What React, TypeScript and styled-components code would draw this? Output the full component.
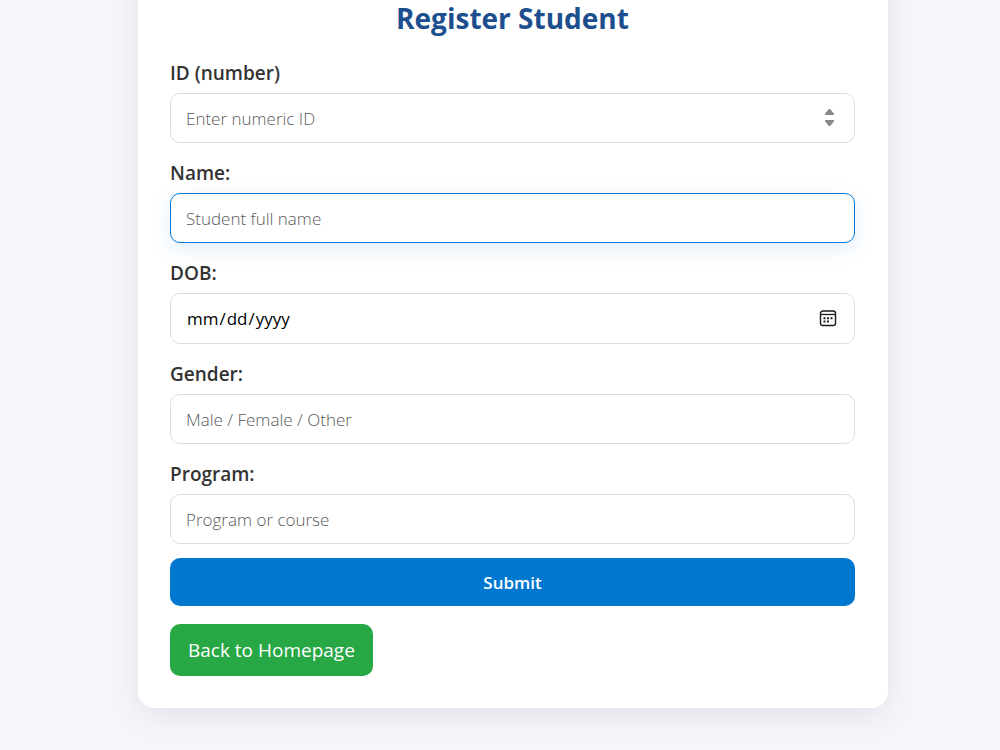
import React from "react";
import styled, { createGlobalStyle, css } from "styled-components";

const GlobalStyle = createGlobalStyle`
  *, *::before, *::after { box-sizing: border-box; }
  body {
    margin: 0;
    background: #f4f6fb;
    color: #333;
    font-family: "Segoe UI", "Open Sans", "Noto Sans", sans-serif;
  }
`;

const Page = styled.main`
  display: flex;
  justify-content: center;
  min-height: 100vh;
  padding: 0 0 42px 26px;
  overflow: hidden;
`;

const Card = styled.section`
  align-self: flex-start;
  width: 100%;
  max-width: 750px;
  margin-top: -32px;
  padding: 32px 33px 32px 32px;
  background: #fff;
  border-radius: 16px;
  box-shadow: 0 8px 30px rgba(0, 0, 0, 0.08);
`;

const Title = styled.h2`
  margin: 0 0 25px;
  color: #1d4f8f;
  font-size: 28px;
  line-height: 36px;
  font-weight: 700;
  text-align: center;
`;

const Form = styled.form`
  display: flex;
  flex-direction: column;
  gap: 18px;
`;

const Field = styled.div`
  display: flex;
  flex-direction: column;
  gap: 8px;
`;

const Label = styled.label`
  font-size: 19px;
  line-height: 24px;
  font-weight: 600;
`;

const Control = styled.div`
  position: relative;
  display: flex;
`;

const Input = styled.input<{ $highlighted?: boolean }>`
  width: 100%;
  height: 50px;
  padding: 0 15px;
  border: 1px solid #d9dce1;
  border-radius: 10px;
  outline: none;
  background: #fff;
  color: #000;
  font-family: inherit;
  font-size: 17px;
  font-weight: 400;

  &::placeholder {
    color: #5a5a5a;
    font-weight: 300;
    opacity: 1;
  }

  &[type="date"] {
    height: 51px;
  }

  &::-webkit-inner-spin-button {
    opacity: 0;
  }

  &::-webkit-calendar-picker-indicator {
    opacity: 0;
  }

  &:focus {
    border-color: #0078d4;
    box-shadow: 0 6px 20px rgba(0, 120, 212, 0.12);
  }

  ${({ $highlighted }) =>
    $highlighted &&
    css`
      border-color: #0078d4;
      box-shadow: 0 6px 20px rgba(0, 120, 212, 0.12);
    `}
`;

const ControlIcon = styled.svg`
  position: absolute;
  top: 50%;
  right: 18px;
  transform: translateY(-50%);
  pointer-events: none;
`;

const SubmitButton = styled.button`
  height: 48px;
  margin-top: -4px;
  border: 0;
  border-radius: 10px;
  background: #0078d0;
  color: #fff;
  font-family: inherit;
  font-size: 17px;
  font-weight: 600;
  cursor: pointer;
`;

const HomeLink = styled.a`
  display: inline-block;
  margin-top: 18px;
  padding: 0 18px;
  border-radius: 10px;
  background: #28a745;
  color: #fff;
  font-size: 19px;
  line-height: 52px;
  text-decoration: none;
  vertical-align: top;
`;

const SpinnerIcon = () => (
  <ControlIcon width="15" height="22" viewBox="0 0 15 22" aria-hidden="true">
    <path
      d="M6.800 2h1.400L12 6.800V8H3V6.800zM3 13h9v1.200L8.200 19H6.800L3 14.200z"
      fill="#8a8a8a"
    />
  </ControlIcon>
);

const CalendarIcon = () => (
  <ControlIcon width="18" height="18" viewBox="0 0 18 18" aria-hidden="true">
    <rect x="1.500" y="1" width="15" height="14.500" rx="2.300" fill="none" stroke="#1a1a1a" strokeWidth="1.400" />
    <path d="M1.500 4.500h15" stroke="#1a1a1a" strokeWidth="1.300" />
    <path
      d="M4.500 7.300h2v2h-2zM8 7.300h2v2H8zM11.500 7.300h2v2h-2zM4.500 10.600h2v2h-2zM8 10.600h2v2H8z"
      fill="#1a1a1a"
    />
  </ControlIcon>
);

export default function App() {
  return (
    <>
      <GlobalStyle />
      <Page>
        <Card>
          <Title>Register Student</Title>
          <Form onSubmit={(e) => e.preventDefault()}>
            <Field>
              <Label htmlFor="student-id">ID (number)</Label>
              <Control>
                <Input id="student-id" type="number" placeholder="Enter numeric ID" />
                <SpinnerIcon />
              </Control>
            </Field>
            <Field>
              <Label htmlFor="student-name">Name:</Label>
              <Control>
                <Input id="student-name" type="text" placeholder="Student full name" $highlighted />
              </Control>
            </Field>
            <Field>
              <Label htmlFor="student-dob">DOB:</Label>
              <Control>
                <Input id="student-dob" type="date" />
                <CalendarIcon />
              </Control>
            </Field>
            <Field>
              <Label htmlFor="student-gender">Gender:</Label>
              <Control>
                <Input id="student-gender" type="text" placeholder="Male / Female / Other" />
              </Control>
            </Field>
            <Field>
              <Label htmlFor="student-program">Program:</Label>
              <Control>
                <Input id="student-program" type="text" placeholder="Program or course" />
              </Control>
            </Field>
            <SubmitButton type="submit">Submit</SubmitButton>
          </Form>
          <HomeLink href="#home">Back to Homepage</HomeLink>
        </Card>
      </Page>
    </>
  );
}
